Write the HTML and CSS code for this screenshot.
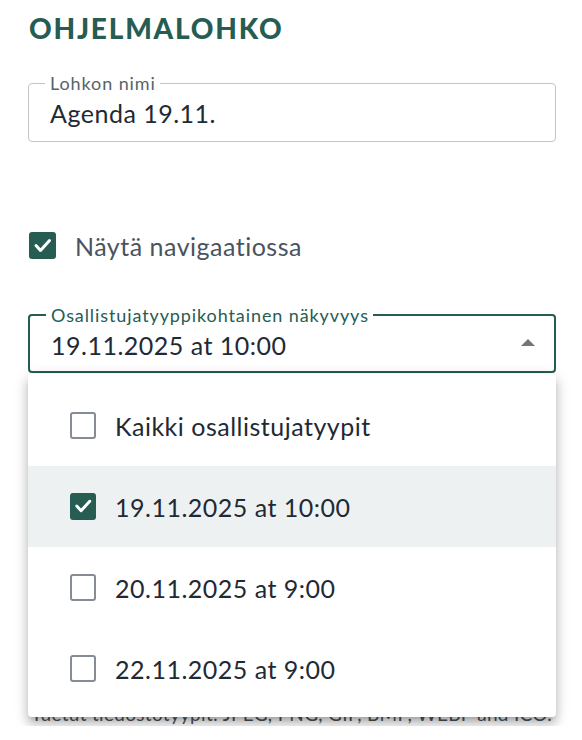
FILE: index.html
```html
<!DOCTYPE html>
<html lang="fi">
<head>
<meta charset="utf-8">
<title>Ohjelmalohko</title>
<link rel="stylesheet" href="styles.css">
</head>
<body>
<main class="page">
  <h1 class="title">OHJELMALOHKO</h1>

  <fieldset class="field">
    <legend class="field-label">Lohkon nimi</legend>
    <div class="field-value">Agenda 19.11.</div>
  </fieldset>

  <label class="check-row">
    <span class="cb cb-on">
      <svg viewBox="0 0 27 27" width="27" height="27"><polyline points="7,13.5 11.5,18.5 20.5,8.5" fill="none" stroke="#fff" stroke-width="3" stroke-linecap="round" stroke-linejoin="round"/></svg>
    </span>
    <span class="check-text">Näytä navigaatiossa</span>
  </label>

  <div class="select-wrap">
    <fieldset class="field field-focus">
      <legend class="field-label">Osallistujatyyppikohtainen näkyvyys</legend>
      <div class="select-row">
        <span class="field-value">19.11.2025 at 10:00</span>
        <svg class="arrow" viewBox="0 0 14 7" width="14" height="7"><path d="M0 7 L7 0 L14 7 Z" fill="#757575"/></svg>
      </div>
    </fieldset>

    <ul class="menu">
      <li class="menu-item">
        <span class="cb cb-off"></span>
        <span class="item-text">Kaikki osallistujatyypit</span>
      </li>
      <li class="menu-item selected">
        <span class="cb cb-on cb-small">
          <svg viewBox="0 0 27 27" width="26" height="26"><polyline points="7,13.5 11.5,18.5 20.5,8.5" fill="none" stroke="#fff" stroke-width="3" stroke-linecap="round" stroke-linejoin="round"/></svg>
        </span>
        <span class="item-text">19.11.2025 at 10:00</span>
      </li>
      <li class="menu-item">
        <span class="cb cb-off"></span>
        <span class="item-text">20.11.2025 at 9:00</span>
      </li>
      <li class="menu-item">
        <span class="cb cb-off"></span>
        <span class="item-text">22.11.2025 at 9:00</span>
      </li>
    </ul>
  </div>

  <p class="help">Tuetut tiedostotyypit: JPEG, PNG, GIF, BMP, WEBP and ICO.</p>
</main>
</body>
</html>
```

FILE: styles.css
```css
* { box-sizing: border-box; }

html, body {
  margin: 0;
  padding: 0;
  background: #ffffff;
}

body {
  font-family: "Lato", "Noto Sans", sans-serif;
  color: #1e2a35;
}

.page {
  width: 582px;
  padding: 0 26px 0 28px;
}

.title {
  margin: 11px 0 0 1px;
  font-size: 28px;
  line-height: 34px;
  font-weight: 900;
  letter-spacing: 1.8px;
  color: #265c52;
}

.field {
  margin: 30px 0 0;
  padding: 0 21px 13px;
  border: 1px solid #c4c4c4;
  border-radius: 4px;
  min-width: 0;
}

.field-label {
  margin-left: -5px;
  padding: 0 4px 0 5px;
  font-size: 18px;
  line-height: 16px;
  letter-spacing: 0.9px;
  color: #59626b;
}

.field-value {
  display: block;
  padding-top: 7px;
  font-size: 25px;
  line-height: 30px;
  letter-spacing: 0.5px;
  color: #1e2a35;
}

.check-row {
  display: flex;
  align-items: center;
  gap: 19px;
  height: 27px;
  margin-top: 90px;
  margin-left: 1px;
}

.cb {
  flex: none;
  display: block;
  width: 27px;
  height: 27px;
  border-radius: 3px;
}

.cb svg { display: block; }

.cb-on { background: #265c52; }

.cb-small {
  width: 26px;
  height: 27px;
}

.cb-off {
  width: 26px;
  height: 27px;
  border: 2.5px solid #858c93;
  border-radius: 3px;
  background: #fff;
}

.check-text {
  font-size: 25px;
  line-height: 30px;
  letter-spacing: 0.5px;
  color: #4a545e;
}

.select-wrap {
  position: relative;
  margin-top: 48px;
}

.field-focus {
  margin: 0;
  border: 2px solid #265c52;
  padding: 0 19px 11px 21px;
}

.field-focus .field-label {
  color: #265c52;
}

.select-row {
  display: flex;
  justify-content: space-between;
  align-items: flex-start;
}

.arrow {
  flex: none;
  margin-top: 16px;
}

.menu {
  position: absolute;
  top: calc(100% + 1px);
  left: 0;
  right: 0;
  margin: 0;
  padding: 11px 0 8px;
  list-style: none;
  background: #fff;
  border-radius: 4px;
  box-shadow: 0 5px 5px -3px rgba(0,0,0,0.2), 0 8px 10px 1px rgba(0,0,0,0.14), 0 3px 14px 2px rgba(0,0,0,0.12);
  z-index: 10;
}

.menu-item {
  display: flex;
  align-items: center;
  gap: 19px;
  height: 81px;
  padding-left: 42px;
}

.menu-item.selected {
  background: #eef1f2;
}

.item-text {
  font-size: 25px;
  line-height: 30px;
  letter-spacing: 0.5px;
  color: #1e2a35;
}

.help {
  margin: 329px 0 0 3px;
  font-size: 19px;
  line-height: 24px;
  letter-spacing: 0.3px;
  white-space: nowrap;
  color: #4a545e;
}
```
